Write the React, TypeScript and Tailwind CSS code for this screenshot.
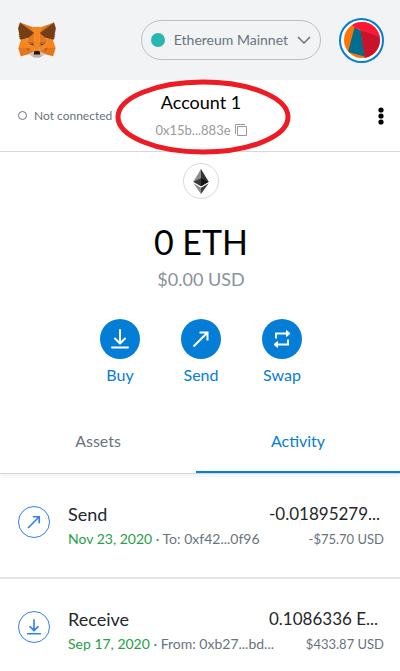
import { useState } from 'react';

type Tab = 'assets' | 'activity';

interface Transaction {
    id: number;
    kind: 'Send' | 'Receive';
    date: string;
    party: string;
    amount: string;
    fiat: string;
}

const transactions: Transaction[] = [
    { id: 2, kind: 'Send', date: 'Nov 23, 2020', party: 'To: 0xf42...0f96', amount: '-0.01895279...', fiat: '-$75.70 USD' },
    { id: 1, kind: 'Receive', date: 'Sep 17, 2020', party: 'From: 0xb27...bd...', amount: '0.1086336 E...', fiat: '$433.87 USD' },
];

// Fox facets, painted in order
const foxFacets: [string, string][] = [
    ['#E2761B', '274.1,35.5 174.6,109.4 193,65.8'],
    ['#E4761B', '44.4,35.5 143.1,110.1 125.6,65.8'],
    ['#E4761B', '238.3,206.8 211.8,247.4 268.5,263 284.8,207.7'],
    ['#E4761B', '33.9,207.7 50.1,263 106.8,247.4 80.3,206.8'],
    ['#E4761B', '103.6,138.2 87.8,162.1 144.1,164.6 142.1,104.1'],
    ['#E4761B', '214.9,138.2 175.9,103.4 174.6,164.6 230.8,162.1'],
    ['#E4761B', '106.8,247.4 140.6,230.9 111.4,208.1'],
    ['#E4761B', '177.9,230.9 211.8,247.4 207.1,208.1'],
    ['#D7C1B3', '211.8,247.4 177.9,230.9 180.6,253 180.3,262.3'],
    ['#D7C1B3', '106.8,247.4 138.3,262.3 138.1,253 140.6,230.9'],
    ['#233447', '138.8,193.5 110.6,185.2 130.5,176.1'],
    ['#233447', '179.7,193.5 188,176.1 208,185.2'],
    ['#CD6116', '106.8,247.4 111.6,206.8 80.3,207.7'],
    ['#CD6116', '207,206.8 211.8,247.4 238.3,207.7'],
    ['#CD6116', '230.8,162.1 174.6,164.6 179.8,193.5 188.1,176.1 208.1,185.2'],
    ['#CD6116', '110.6,185.2 130.6,176.1 138.8,193.5 144.1,164.6 87.8,162.1'],
    ['#E4751F', '87.8,162.1 111.4,208.1 110.6,185.2'],
    ['#E4751F', '208.1,185.2 207.1,208.1 230.8,162.1'],
    ['#E4751F', '144.1,164.6 138.8,193.5 145.4,227.6 146.9,182.7'],
    ['#E4751F', '174.6,164.6 171.9,182.6 173.1,227.6 179.8,193.5'],
    ['#F6851B', '179.8,193.5 173.1,227.6 177.9,230.9 207.1,208.1 208.1,185.2'],
    ['#F6851B', '110.6,185.2 111.4,208.1 140.6,230.9 145.4,227.6 138.8,193.5'],
    ['#C0AD9E', '180.3,262.3 180.6,253 178.1,250.8 140.4,250.8 138.1,253 138.3,262.3 106.8,247.4 117.8,256.4 140.1,271.9 178.4,271.9 200.8,256.4 211.8,247.4'],
    ['#161616', '177.9,230.9 173.1,227.6 145.4,227.6 140.6,230.9 138.1,253 140.4,250.8 178.1,250.8 180.6,253'],
    ['#763D16', '278.3,114.2 286.8,73.4 274.1,35.5 177.9,106.9 214.9,138.2 267.2,153.5 278.8,140 273.8,136.4 281.8,129.1 275.6,124.3 283.6,118.2'],
    ['#763D16', '31.8,73.4 40.3,114.2 34.9,118.2 42.9,124.3 36.8,129.1 44.8,136.4 39.8,140 51.3,153.5 103.6,138.2 140.6,106.9 44.4,35.5'],
    ['#F6851B', '267.2,153.5 214.9,138.2 230.8,162.1 207.1,208.1 238.3,207.7 284.8,207.7'],
    ['#F6851B', '103.6,138.2 51.3,153.5 33.9,207.7 80.3,207.7 111.4,208.1 87.8,162.1'],
    ['#F6851B', '174.6,164.6 177.9,106.9 193.1,65.8 125.6,65.8 140.6,106.9 144.1,164.6 145.3,182.8 145.4,227.6 173.1,227.6 173.3,182.8'],
];

function FoxLogo() {
    return (
        <svg className="h-9 w-[38px]" viewBox="31 35 257 237">
            {foxFacets.map(([fill, points]) => (
                <polygon key={points} fill={fill} stroke={fill} strokeLinejoin="round" points={points} />
            ))}
        </svg>
    );
}

function AccountAvatar() {
    return (
        <svg className="size-9" viewBox="0 0 36 36">
            <defs>
                <clipPath id="avatar">
                    <circle cx="18" cy="18" r="18" />
                </clipPath>
            </defs>
            <g clipPath="url(#avatar)">
                <rect width="36" height="36" fill="#fb7503" />
                <path d="M16 8L36 14V36H20.500z" fill="#c8142a" />
                <path d="M10.500 5.500L16.500 8.500L20.500 34.500L4 30z" fill="#016e8f" />
                <path d="M8 3L14-2H36V15.500L10.500 5.500z" fill="#fb1837" />
            </g>
        </svg>
    );
}

function EthIcon() {
    return (
        <svg className="h-[25px] w-4" viewBox="0 0 256 417">
            <path fill="#343434" d="M128 0l-3 9.500v275.700l3 2.800 128-75.600z" />
            <path fill="#8c8c8c" d="M128 0L0 212.300l128 75.700V154.200z" />
            <path fill="#3c3c3b" d="M128 312.200l-1.600 1.900v98.200l1.600 4.600 128-180.300z" />
            <path fill="#8c8c8c" d="M128 416.900V312.200L0 236.600z" />
            <path fill="#141414" d="M128 288l128-75.700-128-58.100z" />
            <path fill="#393939" d="M0 212.300L128 288V154.200z" />
        </svg>
    );
}

// 20x20 line icons shared by the round buttons and the activity list
function DownloadIcon({ className }: { className: string }) {
    return (
        <svg className={className} viewBox="0 0 20 20" fill="none" stroke="currentColor" strokeWidth="2" strokeLinecap="round" strokeLinejoin="round">
            <path d="M10 1V14M5 9.500l5 5 5-5M2 18.500h16" />
        </svg>
    );
}

function SendIcon({ className }: { className: string }) {
    return (
        <svg className={className} viewBox="0 0 20 20" fill="none" stroke="currentColor" strokeWidth="2">
            <path d="M2.500 17.500L16.500 3.500M8.500 3.500h8v8" />
        </svg>
    );
}

function SwapIcon({ className }: { className: string }) {
    return (
        <svg className={className} viewBox="0 0 20 20" fill="none" stroke="currentColor" strokeWidth="2">
            <path d="M4 9.500V4.500h11M16 10.500v5H5" />
            <path d="M14.500 1.500l3.500 3-3.500 3zM5.500 12.500l-3.500 3 3.500 3z" fill="currentColor" strokeWidth="1" />
        </svg>
    );
}

const actions = [
    { label: 'Buy', Icon: DownloadIcon },
    { label: 'Send', Icon: SendIcon },
    { label: 'Swap', Icon: SwapIcon },
];

function TransactionRow({ tx }: { tx: Transaction }) {
    const Icon = tx.kind === 'Send' ? SendIcon : DownloadIcon;
    return (
        <li className="flex gap-[18px] border-b-2 border-[#e4e4e4] pt-7 pr-4 pb-[25px] pl-[18px]">
            <span className="mt-1 flex size-8 shrink-0 items-center justify-center rounded-full border border-[#2f80ed] text-[#2f80ed]">
                <Icon className="size-4" />
            </span>
            <div className="min-w-0 grow">
                <div className="flex justify-between gap-2 leading-6 whitespace-nowrap text-[#24272a]">
                    <h2 className="text-lg leading-6">{tx.kind}</h2>
                    <span className="w-[115px] text-[17px]">{tx.amount}</span>
                </div>
                <div className="flex justify-between gap-2 leading-[26px] whitespace-nowrap text-[#6a737d]">
                    <p className="text-sm leading-[26px]">
                        <span className="text-[#28a045]">{tx.date} · </span>
                        {tx.party}
                    </p>
                    <span className="text-[13px]">{tx.fiat}</span>
                </div>
            </div>
        </li>
    );
}

export default function App() {
    const [tab, setTab] = useState<Tab>('activity');

    const tabClass = (name: Tab) =>
        tab === name ? 'border-[#037dd6] text-[#037dd6]' : 'border-transparent text-[#6a737d]';

    return (
        <div className="min-h-screen bg-white font-['Lato',sans-serif] text-black">
            <header className="flex h-20 items-center bg-[#f2f3f4] pr-4 pl-[18px]">
                <FoxLogo />
                <button className="ml-auto flex h-10 items-center gap-[9px] rounded-full border border-[#bbc0c5] px-[9px] text-sm text-[#6a737d]">
                    <span className="size-[14px] rounded-full bg-[#29b6af]" />
                    Ethereum Mainnet
                    <svg className="h-2 w-[14px]" viewBox="0 0 14 8" fill="none" stroke="currentColor" strokeWidth="1.500">
                        <path d="M1 1l6 6 6-6" />
                    </svg>
                </button>
                <button aria-label="Account menu" className="ml-[18px] flex size-[45px] items-center justify-center rounded-full border-2 border-[#037dd6] bg-white">
                    <AccountAvatar />
                </button>
            </header>

            <section className="relative grid h-18 grid-cols-[1fr_auto_1fr] items-center border-b border-[#d6d9dc] pr-4 pl-[18px]">
                <div className="flex items-center gap-[7px] text-xs whitespace-nowrap text-[#6a737d]">
                    <span className="size-[9px] rounded-full border border-[#6a737d]" />
                    Not connected
                </div>
                <button className="flex flex-col items-center gap-0.5 pt-[3px]">
                    <span className="text-lg leading-6">Account 1</span>
                    <span className="flex items-center gap-1 text-[13px] leading-7 text-[#989a9b]">
                        0x15b...883e
                        <svg className="size-3" viewBox="0 0 12 12" fill="none" stroke="currentColor">
                            <path d="M.5 10V.5H10M2.500 2.500h9v9h-9z" />
                        </svg>
                    </span>
                </button>
                <button aria-label="Account options" className="justify-self-end">
                    <svg className="h-[18px] w-[6px]" viewBox="0 0 6 18">
                        <circle cx="3" cy="3" r="2.600" />
                        <circle cx="3" cy="9" r="2.600" />
                        <circle cx="3" cy="15" r="2.600" />
                    </svg>
                </button>
                {/* hand-drawn marker around the account name */}
                <svg className="pointer-events-none absolute -top-px left-1/2 z-10 ml-[-85px] h-[76px] w-[176px]" viewBox="0 0 176 76" fill="none">
                    <ellipse cx="88" cy="38" rx="85" ry="35" stroke="#ed1c24" strokeWidth="5" />
                </svg>
            </section>

            <section className="flex flex-col items-center pt-[11px] pl-0.5">
                <span className="flex size-9 items-center justify-center rounded-full border border-[#d6d9dc]">
                    <EthIcon />
                </span>
                <h1 className="mt-5 text-[34px] leading-[46px]">0 ETH</h1>
                <p className="text-lg leading-7 text-[#8a9199]">$0.00 USD</p>
                <div className="mt-[26px] flex gap-[41px]">
                    {actions.map(({ label, Icon }) => (
                        <button key={label} className="flex w-10 flex-col items-center gap-1 text-base text-[#037dd6]">
                            <span className="flex size-10 items-center justify-center rounded-full bg-[#037dd6] text-white">
                                <Icon className="size-5" />
                            </span>
                            {label}
                        </button>
                    ))}
                </div>
            </section>

            <div role="tablist" className="mt-6 flex border-b border-[#d6d9dc] text-base shadow-[0_3px_4px_rgba(0,0,0,0.05)]">
                <button role="tab" aria-selected={tab === 'assets'} onClick={() => setTab('assets')} className={`h-[62px] w-[49%] border-b-2 ${tabClass('assets')}`}>
                    Assets
                </button>
                <button role="tab" aria-selected={tab === 'activity'} onClick={() => setTab('activity')} className={`h-[62px] grow border-b-2 ${tabClass('activity')}`}>
                    Activity
                </button>
            </div>

            {tab === 'activity' && (
                <ul>
                    {transactions.map((tx) => (
                        <TransactionRow key={tx.id} tx={tx} />
                    ))}
                </ul>
            )}
        </div>
    );
}
